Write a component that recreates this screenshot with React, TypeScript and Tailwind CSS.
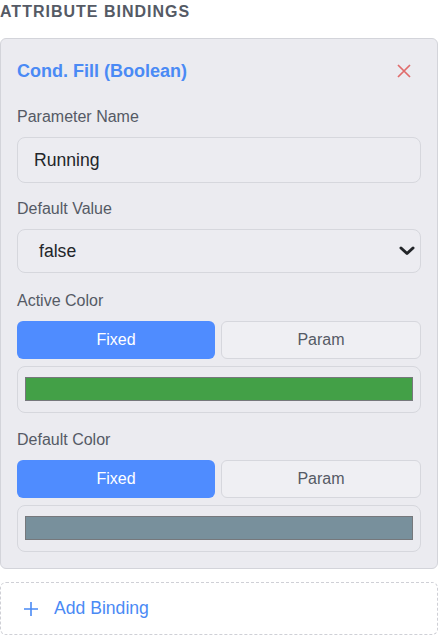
import React from "react";

function ColorField({ label, color, mb }: { label: string; color: string; mb?: string }) {
  return (
    <div className={mb}>
      <div className="text-[16px] leading-5 text-[#555a65] mb-[10px]">{label}</div>
      <div className="flex gap-[6px] mb-[7px]">
        <button className="flex-1 h-[38px] rounded-md bg-[#4f8cff] text-white text-[16px]">Fixed</button>
        <button className="flex-1 h-[38px] rounded-md bg-[#efeff3] border border-[#d6d7dd] text-[#555a65] text-[16px]">Param</button>
      </div>
      <div className="h-[47px] rounded-lg border border-[#d6d7dd] pt-[10px] px-[7px]">
        <div className="h-[24px] border border-[#76787c]" style={{ backgroundColor: color }} />
      </div>
    </div>
  );
}

export default function App() {
  return (
    <div className="w-[438px] bg-white font-['Liberation_Sans',Arial,sans-serif]">
      <div className="text-[16px] leading-6 font-bold tracking-[1px] text-[#555a65]">ATTRIBUTE BINDINGS</div>
      <div className="mt-[14px] rounded-md border border-[#d3d4da] bg-[#ebebf0] p-4">
        <div className="h-8 flex items-center justify-between mb-5">
          <div className="text-[18px] font-bold text-[#4a8af5]">Cond. Fill (Boolean)</div>
          <svg width="14" height="14" viewBox="0 0 14 14" className="mr-[10px]">
            <path d="M1 1 L13 13 M13 1 L1 13" stroke="#e06b6b" strokeWidth="1.7" fill="none" />
          </svg>
        </div>

        <div className="text-[16px] leading-5 text-[#555a65] mb-[10px]">Parameter Name</div>
        <div className="h-[46px] rounded-lg border border-[#d6d7dd] bg-[#ececf1] flex items-center pl-4 text-[17.6px] text-[#222529] mb-4">
          Running
        </div>

        <div className="text-[16px] leading-5 text-[#555a65] mb-[10px]">Default Value</div>
        <div className="h-[44px] rounded-lg border border-[#d6d7dd] bg-[#ececf1] flex items-center justify-between pl-[21px] pr-[5px] text-[17.6px] text-[#222529] mb-[18px]">
          <span>false</span>
          <svg width="16" height="10" viewBox="0 0 16 10">
            <path d="M2 2 L8 7.5 L14 2" stroke="#222529" strokeWidth="3" fill="none" strokeLinecap="round" strokeLinejoin="round" />
          </svg>
        </div>

        <ColorField label="Active Color" color="#43a047" mb="mb-[17px]" />
        <ColorField label="Default Color" color="#78909c" />
      </div>

      <div className="mt-[13px] h-[53px] rounded-md border border-dashed border-[#cfd0d6] flex items-center pl-[23px] gap-4 text-[17.6px] text-[#4a8af5]">
        <svg width="14" height="14" viewBox="0 0 14 14">
          <path d="M7 0 V14 M0 7 H14" stroke="#4a8af5" strokeWidth="1.6" fill="none" />
        </svg>
        <span>Add Binding</span>
      </div>
    </div>
  );
}
